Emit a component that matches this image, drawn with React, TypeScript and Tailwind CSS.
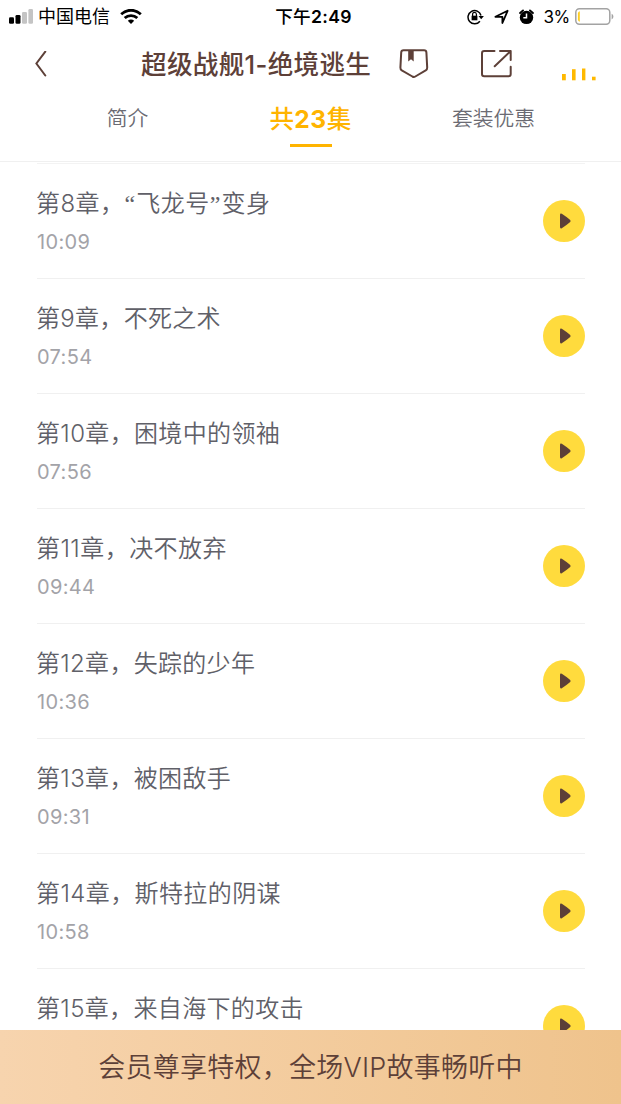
const chapters = [
  { title: '第8章，“飞龙号”变身', time: '10:09', tracking: 'tracking-[0.45px]' },
  { title: '第9章，不死之术', time: '07:54', tracking: 'tracking-[0.3px]' },
  { title: '第10章，困境中的领袖', time: '07:56', tracking: 'tracking-[0.35px]' },
  { title: '第11章，决不放弃', time: '09:44', tracking: 'tracking-[0.45px]' },
  { title: '第12章，失踪的少年', time: '10:36', tracking: 'tracking-[0.3px]' },
  { title: '第13章，被困敌手', time: '09:31', tracking: 'tracking-[0.35px]' },
  { title: '第14章，斯特拉的阴谋', time: '10:58', tracking: 'tracking-[0.4px]' },
  { title: '第15章，来自海下的攻击', time: '', tracking: 'tracking-[0.35px]' },
];

function ChapterTitle({ text }: { text: string }) {
  return (
    <span>
      {text.split(/([“”])/).map((part, index) =>
        part === '“' || part === '”' ? (
          <span key={index} className="font-['Liberation_Serif',serif] tracking-[1.2px]">{part}</span>
        ) : (
          part
        ),
      )}
    </span>
  );
}

function StatusBar() {
  return (
    <div className="grid h-8 shrink-0 grid-cols-[1fr_auto_1fr] items-center text-black">
      <div className="flex items-center pl-[9px]">
        <svg width="24" height="16" viewBox="0 0 24 16">
          <rect x="0" y="8.3" width="5" height="6.4" rx="1.3" />
          <rect x="6.5" y="6" width="5" height="8.7" rx="1.3" />
          <rect x="13" y="3" width="5" height="11.7" rx="1.3" fill="#c4c4c4" />
          <rect x="19.4" y="0" width="4.6" height="14.7" rx="1.3" fill="#c4c4c4" />
        </svg>
        <span className="ml-[5px] pt-px text-[18px] leading-8">中国电信</span>
        <svg className="ml-[10px]" width="22" height="16" viewBox="0 0 22 16" fill="none" stroke="#000" strokeWidth="2.8">
          <path d="M1.2 5.2C6.8-.1 15.2-.1 20.8 5.2" />
          <path d="M4.7 9.1C8.2 5.7 13.8 5.7 17.3 9.1" />
          <path d="M7.8 11.7C9.6 10.1 12.4 10.1 14.2 11.7L11 15Z" fill="#000" stroke="none" />
        </svg>
      </div>
      <div className="pl-[6px] text-[17.6px] leading-8 font-medium tracking-[0.3px]">下午<span className="font-semibold">2:49</span></div>
      <div className="flex items-center justify-end pr-[7px]">
        <svg width="17" height="16" viewBox="0 0 17 16" fill="none" stroke="#000" strokeWidth="1.5">
          <path d="M12.9 12.2A6.6 6.6 0 1 1 14 6.5" />
          <path d="M11.5 7h5.4L14.2 10.2Z" fill="#000" stroke="none" />
          <rect x="4.6" y="6.7" width="5.8" height="4.6" fill="#000" stroke="none" />
          <path d="M5.6 7V5.2a1.9 1.9 0 0 1 3.8 0V7" strokeWidth="1.2" />
        </svg>
        <svg className="ml-[10px]" width="16" height="16" viewBox="0 0 16 16" fill="none" stroke="#000" strokeWidth="1.8" strokeLinejoin="round">
          <path d="M1.4 7.8L13.6 1.8L8.4 14V7.8Z" />
        </svg>
        <svg className="ml-[9px]" width="15" height="16" viewBox="0 0 15 16">
          <circle cx="7.5" cy="8.4" r="6.7" />
          <path d="M1.1 4L4 1.4M13.9 4L11 1.4" stroke="#000" strokeWidth="1.9" strokeLinecap="round" />
          <path d="M7.5 4.4V8.7H4.3" fill="none" stroke="#fff" strokeWidth="1.5" />
        </svg>
        <span className="ml-[9px] text-[17px] leading-8 tracking-[-0.3px]">3%</span>
        <svg className="ml-[5px]" width="39" height="18" viewBox="0 0 39 18">
          <rect x=".8" y=".8" width="34" height="15.4" rx="3.6" fill="none" stroke="#a3a3a3" strokeWidth="1.5" />
          <path d="M4.8 3.2V13.8Q2.9 13.6 2.9 11.6V5.6Q2.9 3.4 4.8 3.2Z" fill="#ffcf21" />
          <path d="M36.6 5.8C39 7 39 10.2 36.6 11.4Z" fill="#a3a3a3" />
        </svg>
      </div>
    </div>
  );
}

function TitleBar() {
  return (
    <header className="flex h-[64px] shrink-0 items-center pl-[35px]">
      <svg width="12" height="26" viewBox="0 0 12 26" fill="none" stroke="#5d4038" strokeWidth="2" strokeLinecap="round">
        <path d="M10.3 .7L1.4 12.5L10.3 24.5" />
      </svg>
      <h1 className="ml-[94px] w-[231px] pt-[2px] text-[25.6px] leading-[38px] font-medium tracking-[0.3px] whitespace-nowrap text-[#5d4038]">超级战舰1-绝境逃生</h1>
      <svg className="ml-[27px]" width="32" height="30" viewBox="0 0 32 30" fill="none" stroke="#5d4038" strokeWidth="2" strokeLinejoin="round">
        <path d="M4.6 1.2H25Q27.3 1.2 27.4 3.5L28.2 18.6Q28.3 20.4 26.7 21.4L16.3 27.5Q14.9 28.3 13.4 27.5L2.8 21.4Q1.3 20.4 1.4 18.6L2.2 3.5Q2.3 1.2 4.6 1.2Z" />
        <path d="M9.2 2H14.7V12.6L12 10.3L9.2 12.6Z" fill="#5d4038" stroke="none" />
      </svg>
      <svg className="ml-[49px]" width="34" height="30" viewBox="0 0 34 30" fill="none" stroke="#5d4038" strokeWidth="2" strokeLinecap="round" strokeLinejoin="round">
        <path d="M14.5 2H4.2Q2 2 2 4.2V25Q2 27.2 4.2 27.2H28.5Q30.7 27.2 30.7 25V17.7" />
        <path d="M20 2H30.7V11M30.2 2.5L14.7 17.3" />
      </svg>
      <svg className="mt-[20px] ml-[48px]" width="34" height="13" viewBox="0 0 34 13" fill="#ffb900">
        <rect y="6" width="3.8" height="6.3" />
        <rect x="10" y="1.2" width="3.6" height="11.1" />
        <rect x="20" y=".5" width="3.4" height="11.8" />
        <rect x="30" y="8.7" width="3.6" height="3.6" />
      </svg>
    </header>
  );
}

function Tabs() {
  return (
    <nav className="grid h-[66px] shrink-0 grid-cols-[186px_180px_186px] justify-center border-b border-[#f0f0f0] text-[20.8px] font-[350] text-[#6b6b73]">
      <span className="flex h-[46px] items-center justify-center">简介</span>
      <span className="flex flex-col items-center text-[#ffb400]">
        <span className="flex h-[46px] items-center text-[24.6px] font-medium whitespace-nowrap">共<span className="font-bold tracking-[0.6px]">23</span>集</span>
        <span className="mt-[2px] h-[3px] w-[42px] bg-[#ffb400]" />
      </span>
      <span className="flex h-[46px] items-center justify-center">套装优惠</span>
    </nav>
  );
}

export default function App() {
  return (
    <div className="flex h-[1104px] w-full flex-col overflow-hidden bg-white font-['Inter','Noto_Sans_CJK_SC',sans-serif]">
      <StatusBar />
      <TitleBar />
      <Tabs />
      <main className="min-h-0 flex-1 overflow-hidden pr-[36px] pl-[37px] pt-px">
        <ul className="border-t border-[#f3f3f3]">
          {chapters.map((chapter) => (
            <li key={chapter.title} className="flex h-[115px] items-center justify-between border-b border-[#f0f0f0]">
              <div className="-ml-px">
                <div className={`flex h-[41px] items-center text-[24px] font-[350] whitespace-nowrap text-[#606068] ${chapter.tracking}`}>
                  <ChapterTitle text={chapter.title} />
                </div>
                <div className="mt-px ml-px h-[34px] text-[20px] leading-[34px] tracking-[0.35px] text-[#a3a3a8]">{chapter.time}</div>
              </div>
              <button className="flex size-[42px] items-center justify-center rounded-full bg-[#ffdb3d]" aria-label="播放">
                <svg className="ml-[3px]" width="11" height="16" viewBox="0 0 11 16" fill="#5d4038">
                  <path d="M0 2Q0 0 1.8.8Q6.5 3.8 10.2 7Q11 8 10.2 9Q6.5 12.2 1.8 15.2Q0 16 0 14Z" />
                </svg>
              </button>
            </li>
          ))}
        </ul>
      </main>
      <footer className="flex h-[74px] shrink-0 items-center justify-center bg-linear-to-r from-[#f7d4ae] to-[#efc38c] pt-[2px] text-[27px] font-[350] tracking-[0.25px] whitespace-nowrap text-[#5d4038]">
        会员尊享特权，全场VIP故事畅听中
      </footer>
    </div>
  );
}
